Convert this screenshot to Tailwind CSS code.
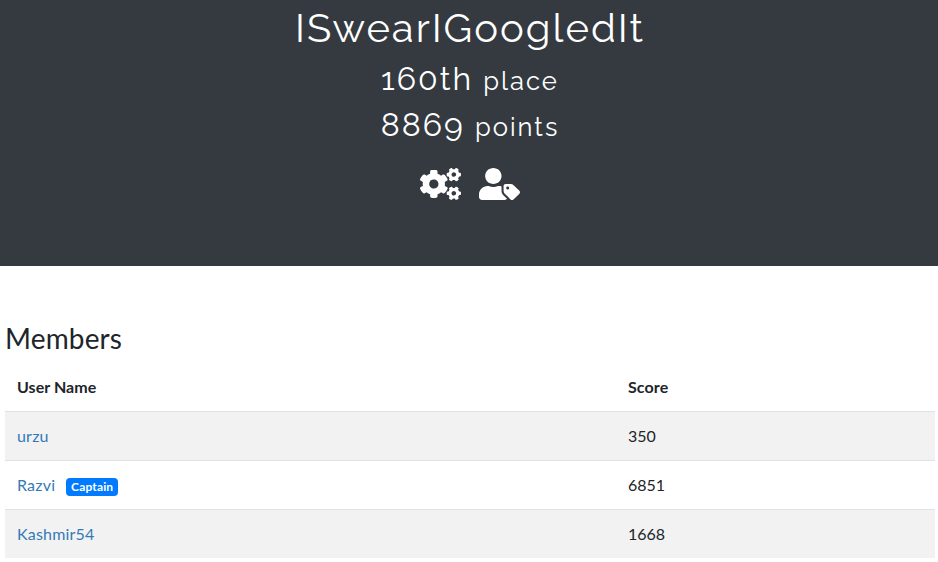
<!DOCTYPE html>
<html lang="en">
<head>
<meta charset="utf-8">
<title>ISwearIGoogledIt</title>
<script src="https://cdn.jsdelivr.net/npm/@tailwindcss/browser@4"></script>
</head>
<body class="h-[562px] overflow-hidden bg-white font-['Lato',sans-serif] text-base text-[#212529]">
<header class="flex h-[266px] flex-col items-center bg-[#343a40] font-['Raleway','Lato',sans-serif] text-white">
  <h1 class="mt-1 h-[51px] pl-[2px] whitespace-nowrap text-[40px] leading-[48px] tracking-[2px]">ISwearIGoogledIt</h1>
  <h2 class="mt-[5px] h-[38px] pl-[2px] whitespace-nowrap text-[32px] leading-[38px] tracking-[2px]">160th <small class="text-[25.6px]">place</small></h2>
  <h2 class="mt-2 h-[38px] pl-[2px] whitespace-nowrap text-[32px] leading-[38px] tracking-[2px]">8869 <small class="text-[25.6px]">points</small></h2>
  <div class="mt-6 flex gap-[18px] pl-[2px]">
    <svg class="h-8 w-[41px]" viewBox="0 0 640 512" preserveAspectRatio="none" fill="currentColor" aria-hidden="true">
      <defs><path id="cog" d="M512.1 191l-8.2 14.3c-3 5.3-9.4 7.5-15.1 5.4-11.8-4.4-22.6-10.7-32.1-18.6-4.6-3.8-5.8-10.5-2.8-15.7l8.2-14.3c-6.9-8-12.3-17.3-15.9-27.4h-16.5c-6 0-11.2-4.3-12.2-10.3-2-12-2.1-24.6 0-37.1 1-6 6.2-10.4 12.2-10.4h16.5c3.6-10.1 9-19.4 15.9-27.4l-8.2-14.3c-3-5.2-1.9-11.9 2.8-15.7 9.5-7.9 20.4-14.2 32.1-18.6 5.7-2.1 12.1.1 15.1 5.4l8.2 14.3c10.5-1.9 21.2-1.9 31.7 0L552 6.3c3-5.3 9.4-7.5 15.1-5.4 11.8 4.4 22.6 10.7 32.1 18.6 4.6 3.8 5.8 10.5 2.8 15.7l-8.2 14.3c6.9 8 12.3 17.3 15.9 27.4h16.5c6 0 11.2 4.3 12.2 10.3 2 12 2.1 24.6 0 37.1-1 6-6.2 10.4-12.2 10.4h-16.5c-3.6 10.1-9 19.4-15.9 27.4l8.2 14.3c3 5.2 1.9 11.9-2.8 15.7-9.5 7.9-20.4 14.2-32.1 18.6-5.7 2.1-12.1-.1-15.1-5.4l-8.2-14.3c-10.4 1.9-21.2 1.9-31.7 0zm-10.5-58.8c38.5 29.6 82.4-14.3 52.8-52.8-38.5-29.7-82.4 14.3-52.8 52.8z"/></defs>
      <use href="#cog"/><use href="#cog" y="298.9"/>
      <path d="M386.3 286.1l33.7 16.8c10.1 5.8 14.5 18.1 10.5 29.1-8.9 24.2-26.4 46.4-42.6 65.8-7.4 8.9-20.2 11.1-30.3 5.3l-29.1-16.8c-16 13.7-34.6 24.6-54.9 31.7v33.6c0 11.6-8.3 21.6-19.7 23.6-24.6 4.2-50.4 4.4-75.9 0-11.5-2-20-11.9-20-23.6V418c-20.3-7.2-38.9-18-54.9-31.7L74 403c-10 5.8-22.9 3.6-30.3-5.3-16.2-19.4-33.3-41.6-42.2-65.7-4-10.9.4-23.2 10.5-29.1l33.3-16.8c-3.9-20.9-3.9-42.4 0-63.4L12 205.8c-10.1-5.8-14.6-18.1-10.5-29 8.9-24.2 26-46.4 42.2-65.8 7.4-8.9 20.2-11.1 30.3-5.3l29.1 16.8c16-13.7 34.6-24.6 54.9-31.7V57.1c0-11.5 8.2-21.5 19.6-23.5 24.6-4.2 50.5-4.4 76-.1 11.5 2 20 11.9 20 23.6v33.6c20.3 7.2 38.9 18 54.9 31.7l29.1-16.8c10-5.8 22.9-3.6 30.3 5.3 16.2 19.4 33.2 41.6 42.1 65.8 4 10.9.1 23.2-10 29.1l-33.7 16.8c3.9 21 3.9 42.5 0 63.5zm-117.6 21.1c59.2-77-28.7-164.9-105.7-105.7-59.2 77 28.7 164.9 105.7 105.7z"/>
    </svg>
    <svg class="h-8 w-[41px]" viewBox="0 0 640 512" preserveAspectRatio="none" fill="currentColor" aria-hidden="true"><path d="M630.6 364.9l-90.3-90.2c-12-12-28.3-18.7-45.3-18.7h-79.3c-17.7 0-32 14.3-32 32v79.2c0 17 6.7 33.2 18.7 45.2l90.3 90.2c12.5 12.5 32.8 12.5 45.3 0l92.5-92.5c12.6-12.5 12.6-32.7.1-45.2zm-182.8-21c-13.3 0-24-10.7-24-24s10.7-24 24-24 24 10.7 24 24c0 13.2-10.7 24-24 24zm-223.8-88c70.7 0 128-57.3 128-128C352 57.3 294.7 0 224 0S96 57.3 96 128c0 70.6 57.3 127.9 128 127.9zm127.8 111.2V294c-12.2-3.6-24.9-6.2-38.2-6.2h-16.7c-22.2 10.2-46.9 16-72.9 16s-50.6-5.8-72.9-16h-16.7C60.2 287.9 0 348.1 0 422.3v41.6c0 26.5 21.5 48 48 48h352c15.5 0 29.1-7.5 37.9-18.9l-58-58c-18.1-18.1-28.1-42.2-28.1-67.9z"/></svg>
  </div>
</header>
<main class="ml-[5px] w-[930px] pt-[55px]">
  <h3 class="mb-2 text-[28px] leading-[34px] tracking-[0.15px]">Members</h3>
  <table class="w-full table-fixed border-collapse text-left">
    <colgroup><col class="w-[611px]"><col></colgroup>
    <thead><tr class="h-12"><th class="px-3 font-bold tracking-[0.06px]">User Name</th><th class="px-3 font-bold tracking-[0.1px]">Score</th></tr></thead>
    <tbody>
      <tr class="h-[49px] border-t border-[#dee2e6] bg-[#f2f2f2]"><td class="px-3"><a class="tracking-[0.2px] text-[#337ab7]">urzu</a></td><td class="px-3">350</td></tr>
      <tr class="h-[49px] border-t border-[#dee2e6]"><td class="px-3"><div class="flex items-center"><a class="tracking-[0.2px] text-[#337ab7]">Razvi</a><span class="relative top-[2px] ml-[11px] h-[18px] w-[52px] rounded-[4px] bg-[#007bff] text-center text-xs leading-[18px] font-bold tracking-[0.15px] text-white">Captain</span></div></td><td class="px-3">6851</td></tr>
      <tr class="h-[49px] border-t border-[#dee2e6] bg-[#f2f2f2]"><td class="px-3"><a class="tracking-[0.2px] text-[#337ab7]">Kashmir54</a></td><td class="px-3">1668</td></tr>
    </tbody>
  </table>
</main>
</body>
</html>
